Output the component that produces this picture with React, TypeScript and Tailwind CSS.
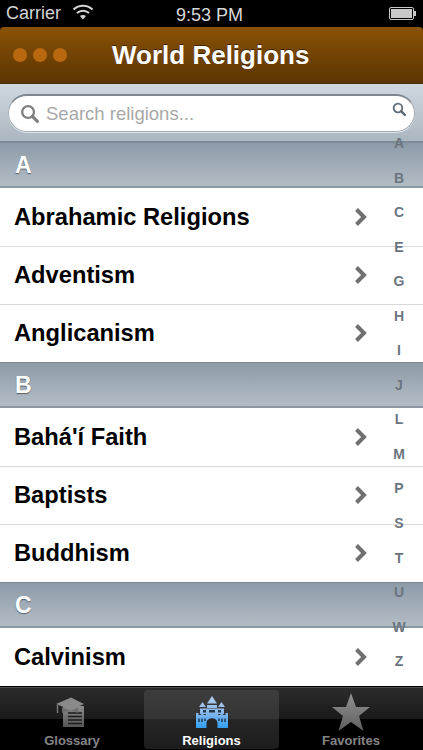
import React from "react";

const font = "font-['Liberation_Sans',Arial,sans-serif]";

const sections = [
  { letter: "A", items: ["Abrahamic Religions", "Adventism", "Anglicanism"] },
  { letter: "B", items: ["Bahá'í Faith", "Baptists", "Buddhism"] },
  { letter: "C", items: ["Calvinism"] },
];

const indexLetters = ["A", "B", "C", "E", "G", "H", "I", "J", "L", "M", "P", "S", "T", "U", "W", "Z"];

function Chevron() {
  return (
    <svg width="14" height="20" viewBox="0 0 14 20" className="block">
      <path d="M2.5 2.5 L10 10 L2.5 17.5" fill="none" stroke="#707070" strokeWidth="4" />
    </svg>
  );
}

function SearchIcon({ size, color, width }: { size: number; color: string; width: number }) {
  return (
    <svg width={size} height={size} viewBox="0 0 20 20" className="block">
      <circle cx="8.5" cy="8.5" r="6.2" fill="none" stroke={color} strokeWidth={width} />
      <path d="M13 13 L18.3 18.3" stroke={color} strokeWidth={width + 0.8} strokeLinecap="round" />
    </svg>
  );
}

function StatusBar() {
  return (
    <div className="h-[27px] bg-black flex items-center px-[6px] text-[#d4d4d4] text-[18px] relative">
      <span>Carrier</span>
      <svg width="22" height="16" viewBox="0 0 22 16" className="ml-[11px] -mt-[3px]">
        <path d="M1.5 5.5 C7 0.5 15 0.5 20.5 5.5" fill="none" stroke="#d4d4d4" strokeWidth="2.2" />
        <path d="M5 9 C8.5 6 13.5 6 17 9" fill="none" stroke="#d4d4d4" strokeWidth="2.2" />
        <path d="M8 12 L11 15.5 L14 12 C12.5 10.5 9.5 10.5 8 12 Z" fill="#d4d4d4" />
      </svg>
      <span className="absolute left-[176px] top-[2px] text-[#d8d8d8]">9:53 PM</span>
      <div className="ml-auto mr-[1px] flex items-center">
        <div className="w-[25px] h-[13px] border border-[#c8c8c8] rounded-[2px] p-[1px]">
          <div className="w-full h-full bg-[#c8c8c8]" />
        </div>
        <div className="w-[2px] h-[5px] bg-[#c8c8c8]" />
      </div>
    </div>
  );
}

function NavBar() {
  return (
    <div className="h-[57px] rounded-t-[4px] bg-gradient-to-b from-[#8a5205] to-[#5c3503] border-b border-[#4a2b04] flex items-center relative">
      <div className="flex gap-[6px] ml-[13px]">
        <div className="w-[14px] h-[14px] rounded-full bg-[#b8690f]" />
        <div className="w-[14px] h-[14px] rounded-full bg-[#b8690f]" />
        <div className="w-[14px] h-[14px] rounded-full bg-[#b8690f]" />
      </div>
      <span className="ml-[45px] text-white font-bold text-[26px] [text-shadow:0_-1px_0_rgba(0,0,0,0.5)]">
        World Religions
      </span>
    </div>
  );
}

function SearchBar() {
  return (
    <div className="h-[58px] bg-gradient-to-b from-[#d0d8df] to-[#aab6c0] border-b border-[#7f8b96] px-[8px] pt-[10px]">
      <div className="h-[38px] rounded-full bg-white border border-[#a6acb3] border-t-2 border-t-[#80868d] shadow-[0_1px_0_rgba(255,255,255,0.6)] flex items-center pl-[11px]">
        <SearchIcon size={19} color="#7f7f7f" width={2.4} />
        <span className="ml-[7px] pt-[1px] text-[#a8a8a8] text-[18.5px]">Search religions...</span>
      </div>
    </div>
  );
}

function SectionHeader({ letter }: { letter: string }) {
  return (
    <div className="h-[46px] bg-gradient-to-b from-[#8d9ba8] to-[#b3bdc6] border-t border-[#7c8894] border-b-2 border-b-[#8c98a3] flex items-center pl-[15px]">
      <span className="pt-[2px] text-white font-bold text-[23px] [text-shadow:0_1px_1px_rgba(70,80,90,0.8)]">{letter}</span>
    </div>
  );
}

function Row({ label, first }: { label: string; first: boolean }) {
  return (
    <div className={`h-[58px] bg-white flex items-center pl-[14px] pr-[55px] ${first ? "" : "border-t border-[#d9d9d9] pb-[1px]"}`}>
      <span className="flex-1 pt-[2px] text-black font-bold text-[23.7px]">{label}</span>
      <Chevron />
    </div>
  );
}

function SideIndex() {
  return (
    <div className="absolute right-[12px] top-[98px] w-[24px] flex flex-col items-center text-[#6b7580] font-bold text-[14px]">
      <div className="h-[28px] pt-[4px]">
        <SearchIcon size={14} color="#5f6b76" width={2.6} />
      </div>
      {indexLetters.map((l) => (
        <div key={l} className="h-[34.55px] leading-[34.55px]">
          {l}
        </div>
      ))}
    </div>
  );
}

function GlossaryIcon() {
  return (
    <svg width="32" height="32" viewBox="0 0 32 32" className="-ml-[3px]">
      <defs>
        <linearGradient id="gl" x1="0" y1="0" x2="0" y2="1">
          <stop offset="0" stopColor="#8c8c8c" />
          <stop offset="1" stopColor="#565656" />
        </linearGradient>
      </defs>
      <path d="M8 10 H29 V31 H8 Z" fill="url(#gl)" />
      <path d="M13 17 H27 M13 20.5 H27 M13 24 H27 M13 27.5 H27" stroke="#1b1b1b" strokeWidth="1.5" />
      <path d="M1 8 L16 1.5 L29 8 L16 14 Z" fill="#8a8a8a" />
      <path d="M7 11.5 V17 C11 14.5 19 14.5 23 17 V11.5 L16 15 Z" fill="#6f6f6f" />
      <path d="M2.5 9 V17" stroke="#777" strokeWidth="1.5" />
    </svg>
  );
}

function CastleIcon() {
  return (
    <svg width="34" height="33" viewBox="0 0 34 33">
      <defs>
        <linearGradient id="cs" gradientUnits="userSpaceOnUse" x1="0" y1="0" x2="0" y2="32">
          <stop offset="0" stopColor="#b4cdea" />
          <stop offset="0.5" stopColor="#8ab8ea" />
          <stop offset="1" stopColor="#2f9ff5" />
        </linearGradient>
      </defs>
      <path d="M17 0 L22 7.5 H12 Z" fill="url(#cs)" />
      <path d="M7.5 6 L11 11 H4 Z" fill="url(#cs)" />
      <path d="M26.5 6 L30 11 H23 Z" fill="url(#cs)" />
      <path d="M12 9 H22 V12 H12 Z" fill="url(#cs)" />
      <path d="M5 12.5 H29 V18 H5 Z" fill="url(#cs)" />
      <path d="M14 14 H20 V16.5 H14 Z M8 14 H11 V16.5 H8 Z M23 14 H26 V16.5 H23 Z" fill="#24384d" />
      <path
        fill="url(#cs)"
        d="M1 17 H3.5 V19 H6 V17 H8.5 V19 H11 V17 H23 V19 H25.5 V17 H28 V19 H30.5 V17 H33 V32 H22.5 V27 C22.5 20.5 11.5 20.5 11.5 27 V32 H1 Z"
      />
      <path d="M4 22.5 V26 M7 22.5 V26 M10 22.5 V25 M24 22.5 V25 M27 22.5 V26 M30 22.5 V26" stroke="#16283a" strokeWidth="1.3" />
    </svg>
  );
}

function StarIcon() {
  return (
    <svg width="40" height="38" viewBox="0 0 40 38">
      <defs>
        <linearGradient id="st" x1="0" y1="0" x2="0" y2="1">
          <stop offset="0" stopColor="#929292" />
          <stop offset="1" stopColor="#5e5e5e" />
        </linearGradient>
      </defs>
      <path d="M20 0 L25 14 H39 L28 23 L32.5 38 L20 29 L7.5 38 L12 23 L1 14 H15 Z" fill="url(#st)" />
    </svg>
  );
}

function TabBar() {
  return (
    <div className="h-[63px] relative grid grid-cols-[144px_135px_144px] bg-[linear-gradient(to_bottom,#2b2b2b_0,#1a1a1a_31px,#000_31px,#000_100%)] border-t border-[#4c4c4c]">
      <div className="flex flex-col items-center pt-[3px]">
        <div className="h-[42px] flex items-center"><GlossaryIcon /></div>
        <span className="text-[#858585] font-bold text-[13px] leading-[15px]">Glossary</span>
      </div>
      <div className="mt-[2px] mb-[1px] rounded-[4px] bg-[linear-gradient(to_bottom,#3d3d3d_0,#343434_29px,#262626_29px,#1d1d1d_100%)] flex flex-col items-center pt-[1px]">
        <div className="h-[42px] flex items-center"><CastleIcon /></div>
        <span className="text-white font-bold text-[13px] leading-[15px]">Religions</span>
      </div>
      <div className="flex flex-col items-center pt-[3px]">
        <div className="h-[42px] flex items-center"><StarIcon /></div>
        <span className="text-[#858585] font-bold text-[13px] leading-[15px]">Favorites</span>
      </div>
    </div>
  );
}

export default function App() {
  return (
    <div className={`${font} w-[423px] h-[750px] overflow-hidden relative flex flex-col bg-black`}>
      <StatusBar />
      <NavBar />
      <SearchBar />
      <div className="h-[545px] overflow-hidden relative">
        {sections.map((s) => (
          <div key={s.letter}>
            <SectionHeader letter={s.letter} />
            {s.items.map((item, i) => (
              <Row key={item} label={item} first={i === 0} />
            ))}
          </div>
        ))}
      </div>
      <TabBar />
      <SideIndex />
    </div>
  );
}
